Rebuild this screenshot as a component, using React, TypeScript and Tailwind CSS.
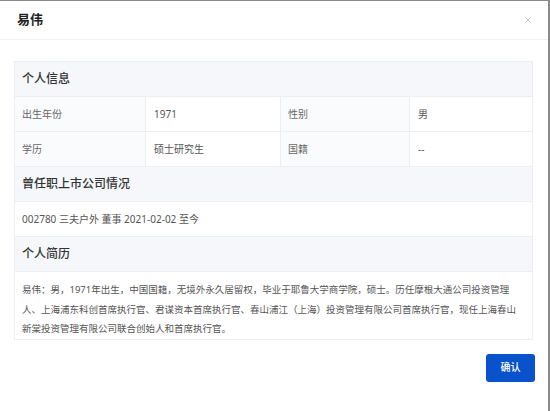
import * as React from "react";
import { X } from "lucide-react";

const font = { fontFamily: '"Noto Sans", "Noto Sans CJK SC", sans-serif' };

type Cell = { label: string; value: string };

const basicRows: Cell[][] = [
  [
    { label: "出生年份", value: "1971" },
    { label: "性别", value: "男" },
  ],
  [
    { label: "学历", value: "硕士研究生" },
    { label: "国籍", value: "--" },
  ],
];

function SectionHead({ children }: { children: React.ReactNode }) {
  return (
    <div className="flex h-[35px] items-center border-b border-[#ebeef5] bg-[#f5f7fa] px-[7px] text-[12px] font-medium text-[#333]">
      {children}
    </div>
  );
}

export default function App() {
  return (
    <div className="h-[411px] w-[550px] bg-[#8a8a8a] pt-px" style={font}>
      <div className="flex h-[410px] w-[548px] flex-col bg-white">
        <div className="flex h-[39px] items-center justify-between border-b border-[#f0f0f0] pl-[17px] pr-[15px]">
          <h1 className="text-[13px] font-bold text-[#222]">易伟</h1>
          <button type="button" aria-label="Close" className="text-[#a0a0a0]">
            <X className="size-[10px]" strokeWidth={1.5} />
          </button>
        </div>

        <div className="px-[14px] pt-[21px]">
          <div className="w-[519px] border border-[#ebeef5]">
            <SectionHead>个人信息</SectionHead>
            {basicRows.map((row, i) => (
              <div key={i} className="grid h-[35px] grid-cols-[131px_135px_129px_1fr] border-b border-[#ebeef5] text-[10px] text-[#666]">
                {row.map((c) => (
                  <React.Fragment key={c.label}>
                    <div className="flex items-center border-r border-[#ebeef5] bg-[#fafbfc] px-[7px]">{c.label}</div>
                    <div className="flex items-center border-r border-[#ebeef5] px-[8px] text-[#555] last:border-r-0">
                      {c.value}
                    </div>
                  </React.Fragment>
                ))}
              </div>
            ))}
            <SectionHead>曾任职上市公司情况</SectionHead>
            <div className="flex h-[35px] items-center border-b border-[#ebeef5] px-[7px] text-[10px] text-[#555]">
              002780 三夫户外 董事 2021-02-02 至今
            </div>
            <SectionHead>个人简历</SectionHead>
            <p className="w-[513px] px-[7px] pt-[8px] pb-[0px] text-[9.5px] leading-[19.5px] text-[#555]">
              易伟：男，1971年出生，中国国籍，无境外永久居留权，毕业于耶鲁大学商学院，硕士。历任摩根大通公司投资管理人、上海浦东科创首席执行官、君谋资本首席执行官、春山浦江（上海）投资管理有限公司首席执行官，现任上海春山新棠投资管理有限公司联合创始人和首席执行官。
            </p>
          </div>
        </div>

        <div className="flex justify-end px-[13px] pt-[14px]">
          <button
            type="button"
            className="h-[28px] w-[49px] rounded-[3px] bg-[#0a52cc] text-[10px] font-medium text-white"
          >
            确认
          </button>
        </div>
      </div>
    </div>
  );
}
